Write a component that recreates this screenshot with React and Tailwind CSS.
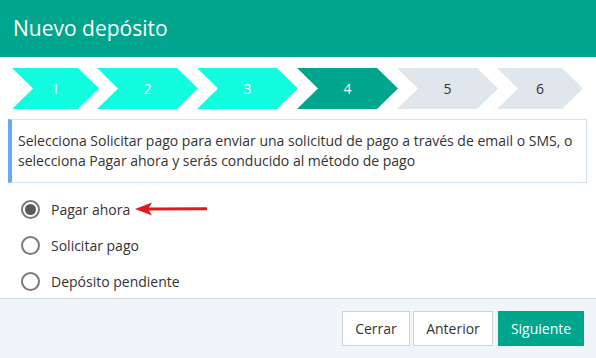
const steps = [
  { n: 1, w: "w-[87px]", ml: "", cls: "bg-[#12fde0] text-white" },
  { n: 2, w: "w-[101px]", ml: "-ml-[2px]", cls: "bg-[#12fde0] text-white" },
  { n: 3, w: "w-[101px]", ml: "-ml-[1px]", cls: "bg-[#12fde0] text-white" },
  { n: 4, w: "w-[101px]", ml: "-ml-[1px]", cls: "bg-[#00a58e] text-white" },
  { n: 5, w: "w-[101px]", ml: "-ml-[1px]", cls: "bg-[#dfe6ec] text-[#333]" },
  { n: 6, w: "w-[86px]", ml: "-ml-[1px]", cls: "bg-[#dfe6ec] text-[#333]" },
];

const options = [
  { label: "Pagar ahora", checked: true },
  { label: "Solicitar pago", checked: false },
  { label: "Depósito pendiente", checked: false },
];

function Radio({ checked }) {
  return (
    <span className="flex h-[19px] w-[19px] items-center justify-center rounded-full border-2 border-[#7a7a7a] bg-white">
      {checked && <span className="h-[11px] w-[11px] rounded-full bg-[#5a5a5a]" />}
    </span>
  );
}

function RedArrow() {
  return (
    <svg width="74" height="16" viewBox="0 0 74 16" className="ml-[4px]">
      <path d="M1 8 L18 1.5 L15 6.5 L73 6.2 L73 9.2 L15 9.5 L18 14.5 Z" fill="#e3191f" />
    </svg>
  );
}

export default function App() {
  return (
    <div className="flex h-[358px] w-[596px] flex-col bg-white font-['Open_Sans',sans-serif] text-[#333]">
      <div className="flex h-[57px] items-center bg-[#00a58e] px-[13px] text-[21px] text-white">
        Nuevo depósito
      </div>

      <div className="ml-[12px] mt-[11px] flex h-[41px]">
        {steps.map((s) => (
          <div
            key={s.n}
            className={`${s.w} ${s.ml} ${s.cls} flex items-center justify-center text-[14px] [clip-path:polygon(0_0,calc(100%-21px)_0,100%_50%,calc(100%-21px)_100%,0_100%,21px_50%)]`}
          >
            {s.n}
          </div>
        ))}
      </div>

      <div className="ml-[8px] mr-[9px] mt-[10px] border border-l-4 border-[#d3e2f5] border-l-[#69a7f5] py-[11px] pl-[6px] pr-[6px] text-[14px] leading-[20px]">
        Selecciona Solicitar pago para enviar una solicitud de pago a través de email o SMS, o
        selecciona Pagar ahora y serás conducido al método de pago
      </div>

      <div className="mt-[16px] flex flex-col gap-[16px] pl-[21px]">
        {options.map((o) => (
          <label key={o.label} className="flex h-[20px] items-center text-[14px]">
            <Radio checked={o.checked} />
            <span className="ml-[11px]">{o.label}</span>
            {o.checked && <RedArrow />}
          </label>
        ))}
      </div>

      <div className="mt-auto flex h-[60px] items-center justify-end gap-[3px] border-t border-[#dcdfe2] bg-[#f0f5fa] pr-[12px]">
        <button className="h-[35px] w-[68px] border border-[#cfd3d7] bg-white text-[14px] text-[#333]">
          Cerrar
        </button>
        <button className="h-[35px] w-[80px] border border-[#cfd3d7] bg-white text-[14px] text-[#333]">
          Anterior
        </button>
        <button className="ml-[2px] h-[35px] w-[86px] bg-[#00a58e] text-[14px] text-white">
          Siguiente
        </button>
      </div>
    </div>
  );
}
